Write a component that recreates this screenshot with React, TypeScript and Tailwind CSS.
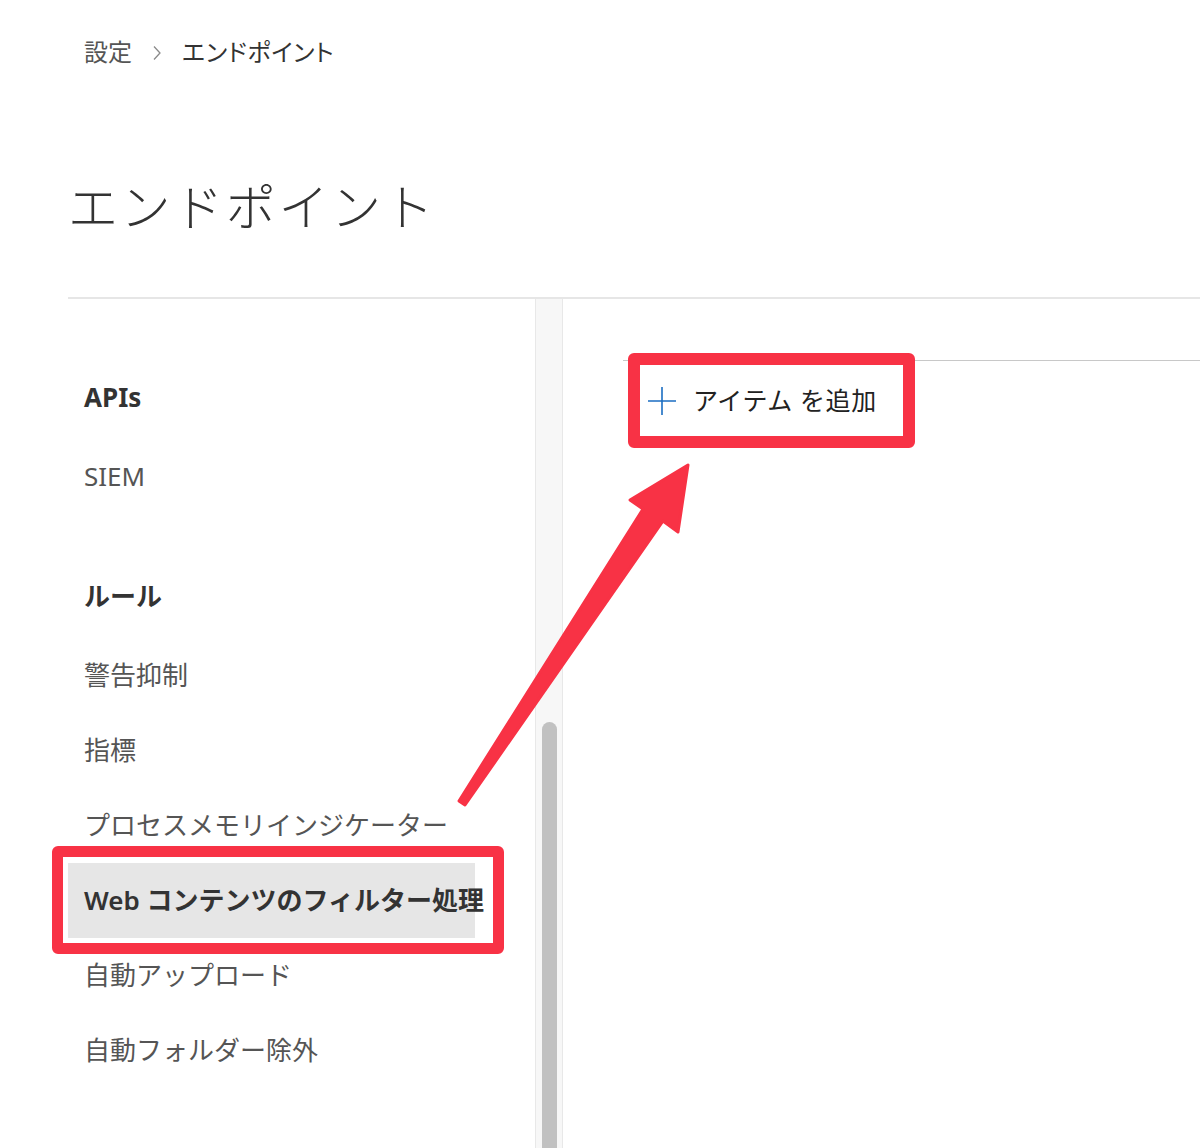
const font = "font-['Noto_Sans','Noto_Sans_CJK_JP',sans-serif]"

const groups = [
  { title: 'APIs', items: ['SIEM'] },
  {
    title: 'ルール',
    items: [
      '警告抑制',
      '指標',
      'プロセスメモリインジケーター',
      'Web コンテンツのフィルター処理',
      '自動アップロード',
      '自動フォルダー除外',
    ],
  },
]

const active = 'Web コンテンツのフィルター処理'

export default function App() {
  return (
    <div className={`relative w-[1200px] h-[1148px] overflow-hidden bg-white text-[#333] ${font}`}>
      {/* Header */}
      <div className="pl-[68px]">
        <div className="h-[104px] flex items-center pl-[16px] gap-[20px] text-[24px] [font-feature-settings:'palt']">
          <span className="text-[#555]">設定</span>
          <svg width="10" height="16" viewBox="0 0 10 16" className="mt-[2px]">
            <path d="M2 1.5 L8 8 L2 14.5" fill="none" stroke="#8a8a8a" strokeWidth="1.3" />
          </svg>
          <span className="text-[#333] tracking-[0.7px]">エンドポイント</span>
        </div>
        <div className="h-[193px] pt-[13px] flex items-center">
          <h1 className="text-[50px] font-light tracking-[2.6px] text-[#333] leading-none">エンドポイント</h1>
        </div>
      </div>

      {/* Body */}
      <div className="ml-[68px] border-t-2 border-[#e6e6e6] flex h-[851px]">
        {/* Side nav */}
        <nav className="w-[467px] pt-[57px]">
          {groups.map((g, gi) => (
            <div key={g.title} className={gi > 0 ? 'mt-[41px]' : ''}>
              <div className="h-[83px] flex items-center pl-[16px] text-[26px] font-bold text-[#333]">
                {g.title}
              </div>
              {g.items.map((it) => (
                <div
                  key={it}
                  className={`w-[407px] h-[75px] flex items-center pl-[16px] text-[26px] whitespace-nowrap ${
                    it === active ? 'bg-[#e6e6e6] font-semibold text-[#333]' : 'text-[#555]'
                  }`}
                >
                  {it}
                </div>
              ))}
            </div>
          ))}
        </nav>

        {/* Scrollbar */}
        <div className="w-[28px] border-l border-r border-[#e8e8e8] bg-[#f7f7f7] flex flex-col">
          <div className="h-[423px]" />
          <div className="ml-[6px] w-[15px] flex-1 bg-[#c1c1c1] rounded-t-full" />
        </div>

        {/* Content */}
        <div className="flex-1 pl-[60px] pt-[61px]">
          <div className="border-t border-[#c8c8c8]">
            <div className="h-[80px] flex items-center pl-[24px] gap-[16px]">
              <svg width="30" height="30" viewBox="0 0 30 30">
                <path d="M15 1 V29 M1 15 H29" stroke="#1b6ec2" strokeWidth="1.6" />
              </svg>
              <span className="text-[25px] tracking-[0.6px] text-[#222]">アイテム を追加</span>
            </div>
          </div>
        </div>
      </div>

      {/* Annotations */}
      <div className="absolute left-[628px] top-[353px] w-[287px] h-[95px] border-[12px] border-[#f83245] rounded-[6px]" />
      <div className="absolute left-[52px] top-[846px] w-[452px] h-[108px] border-[11px] border-[#f83245] rounded-[6px]" />
      <svg className="absolute inset-0 pointer-events-none" width="1200" height="1148" viewBox="0 0 1200 1148">
        <polygon
          points="459,801 643,509 630,500 688,465 678,532 663,521 465,805"
          fill="#f83245"
          stroke="#f83245"
          strokeWidth="3"
          strokeLinejoin="round"
        />
      </svg>
    </div>
  )
}
